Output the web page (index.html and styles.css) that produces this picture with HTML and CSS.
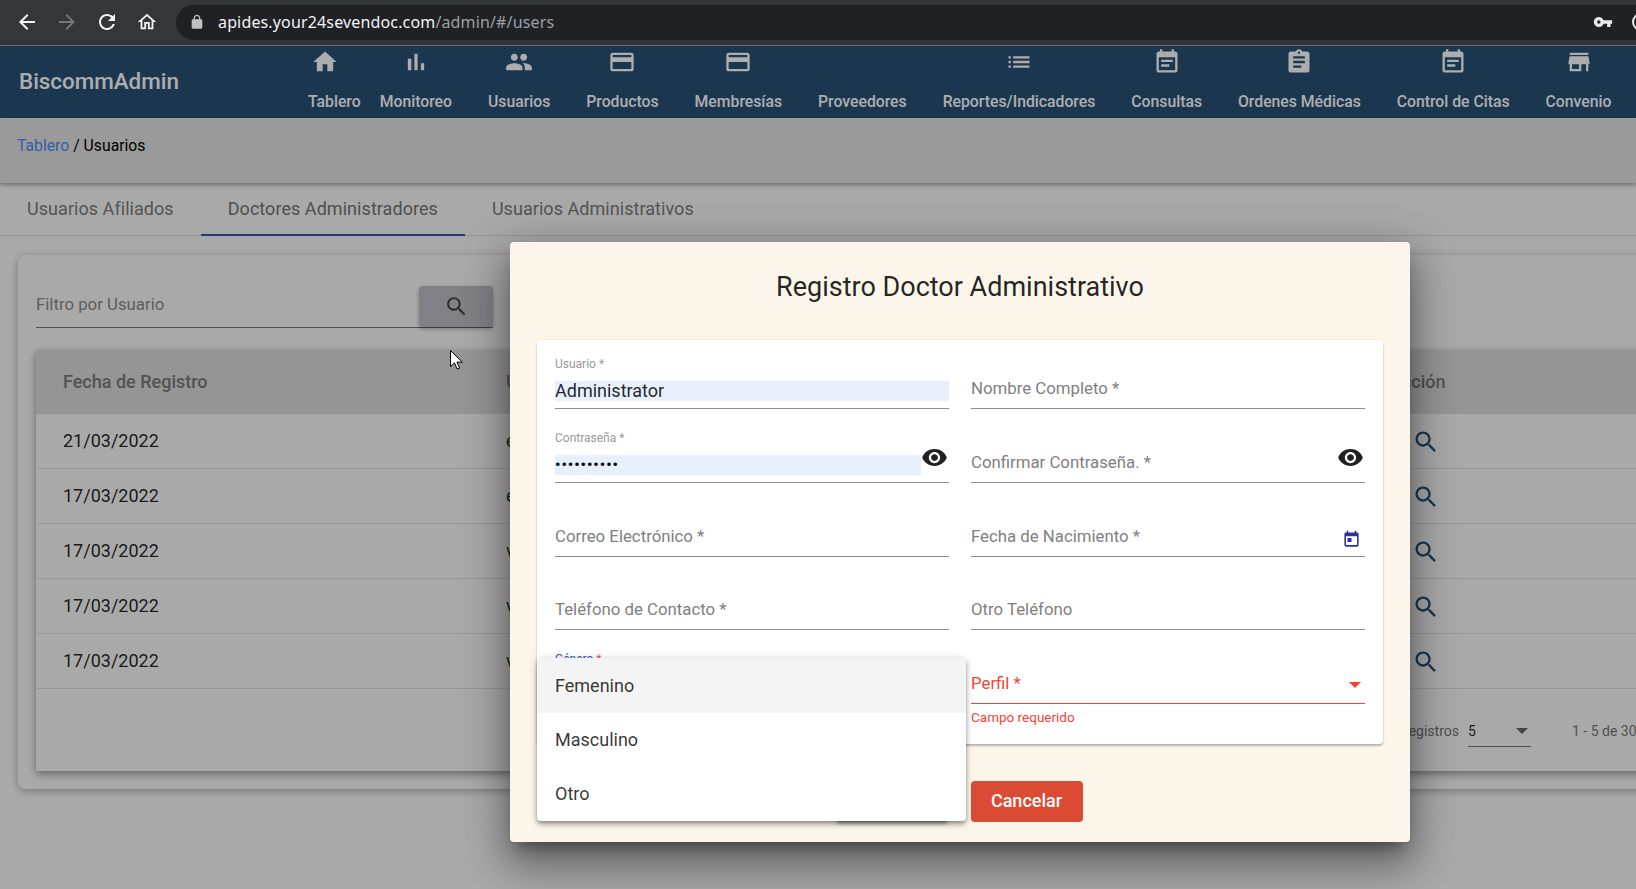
FILE: index.html
```html
<!DOCTYPE html>
<html lang="es">
<head>
<meta charset="utf-8">
<title>BiscommAdmin</title>
<link rel="stylesheet" href="styles.css">
</head>
<body>
<svg class="defs" aria-hidden="true">
  <symbol id="i-back" viewBox="0 0 24 24"><path d="M20 11H7.83l5.59-5.59L12 4l-8 8 8 8 1.41-1.41L7.83 13H20v-2z"/></symbol>
  <symbol id="i-forward" viewBox="0 0 24 24"><path d="M4 11h12.17l-5.59-5.59L12 4l8 8-8 8-1.41-1.41L16.17 13H4v-2z"/></symbol>
  <symbol id="i-reload" viewBox="0 0 24 24"><path d="M17.65 6.35C16.2 4.9 14.21 4 12 4c-4.42 0-7.99 3.58-7.99 8s3.57 8 7.99 8c3.73 0 6.84-2.55 7.73-6h-2.08c-.82 2.33-3.04 4-5.65 4-3.31 0-6-2.69-6-6s2.69-6 6-6c1.66 0 3.14.69 4.22 1.78L13 11h7V4l-2.35 2.35z"/></symbol>
  <symbol id="i-homeline" viewBox="0 0 24 24"><path d="M12 5.69l5 4.5V18h-2v-6H9v6H7v-7.81l5-4.5M12 3L2 12h3v8h6v-6h2v6h6v-8h3L12 3z"/></symbol>
  <symbol id="i-lock" viewBox="0 0 24 24"><path d="M18 8h-1V6c0-2.76-2.24-5-5-5S7 3.24 7 6v2H6c-1.1 0-2 .9-2 2v10c0 1.1.9 2 2 2h12c1.1 0 2-.9 2-2V10c0-1.1-.9-2-2-2zM9 6c0-1.66 1.34-3 3-3s3 1.34 3 3v2H9V6z"/></symbol>
  <symbol id="i-key" viewBox="0 0 24 24"><path d="M12.65 10C11.83 7.67 9.61 6 7 6c-3.31 0-6 2.69-6 6s2.69 6 6 6c2.61 0 4.83-1.67 5.65-4H17v4h4v-4h2v-4H12.65zM7 14c-1.1 0-2-.9-2-2s.9-2 2-2 2 .9 2 2-.9 2-2 2z"/></symbol>
  <symbol id="i-home" viewBox="0 0 24 24"><path d="M10 20v-6h4v6h5v-8h3L12 3 2 12h3v8z"/></symbol>
  <symbol id="i-bars" viewBox="0 0 24 24"><path d="M5 9.2h3V19H5zM10.6 5h2.8v14h-2.8zm5.6 8H19v6h-2.8z"/></symbol>
  <symbol id="i-people" viewBox="0 0 24 24"><path d="M16 11c1.66 0 2.99-1.34 2.99-3S17.66 5 16 5c-1.66 0-3 1.34-3 3s1.34 3 3 3zm-8 0c1.66 0 2.99-1.34 2.99-3S9.66 5 8 5C6.34 5 5 6.34 5 8s1.34 3 3 3zm0 2c-2.33 0-7 1.17-7 3.5V19h14v-2.5c0-2.33-4.67-3.5-7-3.5zm8 0c-.29 0-.62.02-.97.05 1.16.84 1.97 1.97 1.97 3.45V19h6v-2.5c0-2.33-4.67-3.5-7-3.5z"/></symbol>
  <symbol id="i-card" viewBox="0 0 24 24"><path d="M20 4H4c-1.11 0-1.99.89-1.99 2L2 18c0 1.11.89 2 2 2h16c1.11 0 2-.89 2-2V6c0-1.11-.89-2-2-2zm0 14H4v-6h16v6zm0-10H4V6h16v2z"/></symbol>
  <symbol id="i-list" viewBox="0 0 24 24"><path d="M3 13h2v-2H3v2zm0 4h2v-2H3v2zm0-8h2V7H3v2zm4 4h14v-2H7v2zm0 4h14v-2H7v2zM7 7v2h14V7H7z"/></symbol>
  <symbol id="i-note" viewBox="0 0 24 24"><path d="M17 10H7v2h10v-2zm2-7h-1V1h-2v2H8V1H6v2H5c-1.11 0-1.99.9-1.99 2L3 19c0 1.1.89 2 2 2h14c1.1 0 2-.9 2-2V5c0-1.1-.9-2-2-2zm0 16H5V8h14v11zm-5-5H7v2h7v-2z"/></symbol>
  <symbol id="i-assign" viewBox="0 0 24 24"><path d="M19 3h-4.18C14.4 1.84 13.3 1 12 1c-1.3 0-2.4.84-2.82 2H5c-1.1 0-2 .9-2 2v14c0 1.1.9 2 2 2h14c1.1 0 2-.9 2-2V5c0-1.1-.9-2-2-2zm-7 0c.55 0 1 .45 1 1s-.45 1-1 1-1-.45-1-1 .45-1 1-1zm2 14H7v-2h7v2zm3-4H7v-2h10v2zm0-4H7V7h10v2z"/></symbol>
  <symbol id="i-store" viewBox="0 0 24 24"><path d="M20 4H4v2h16V4zm1 10v-2l-1-5H4l-1 5v2h1v6h10v-6h4v6h2v-6h1zm-9 4H6v-4h6v4z"/></symbol>
  <symbol id="i-eye" viewBox="0 0 24 24"><path d="M12 4.5C7 4.5 2.73 7.61 1 12c1.73 4.39 6 7.5 11 7.5s9.27-3.11 11-7.5c-1.73-4.39-6-7.5-11-7.5zM12 17c-2.76 0-5-2.24-5-5s2.24-5 5-5 5 2.24 5 5-2.24 5-5 5zm0-8c-1.66 0-3 1.34-3 3s1.34 3 3 3 3-1.34 3-3-1.34-3-3-3z"/></symbol>
  <symbol id="i-search" viewBox="0 0 24 24"><path d="M15.5 14h-.79l-.28-.27C15.41 12.59 16 11.11 16 9.5 16 5.91 13.09 3 9.5 3S3 5.91 3 9.5 5.91 16 9.5 16c1.61 0 3.09-.59 4.23-1.57l.27.28v.79l5 4.99L20.49 19l-4.99-5zm-6 0C7.01 14 5 11.99 5 9.5S7.01 5 9.5 5 14 7.01 14 9.5 11.99 14 9.5 14z"/></symbol>
  <symbol id="i-today" viewBox="0 0 24 24"><path d="M19 3h-1V1h-2v2H8V1H6v2H5c-1.11 0-1.99.9-1.99 2L3 19c0 1.1.89 2 2 2h14c1.1 0 2-.9 2-2V5c0-1.1-.9-2-2-2zm0 16H5V8h14v11zM7 10h5v5H7z"/></symbol>
</svg>

<div class="browser">
  <svg class="b-icon"><use href="#i-back"/></svg>
  <svg class="b-icon b-icon-off"><use href="#i-forward"/></svg>
  <svg class="b-icon"><use href="#i-reload"/></svg>
  <svg class="b-icon b-icon-home"><use href="#i-homeline"/></svg>
  <div class="omnibox">
    <svg class="omni-lock"><use href="#i-lock"/></svg>
    <span class="url">apides.your24sevendoc.com<span class="url-path">/admin/#/users</span></span>
    <svg class="omni-key"><use href="#i-key"/></svg>
    <span class="omni-avatar"></span>
  </div>
</div>

<header class="topbar">
  <div class="brand">BiscommAdmin</div>
  <nav class="nav">
    <a class="nav-item nav-item-tight"><svg class="nav-icon"><use href="#i-home"/></svg><span>Tablero</span></a>
    <a class="nav-item"><svg class="nav-icon"><use href="#i-bars"/></svg><span>Monitoreo</span></a>
    <a class="nav-item"><svg class="nav-icon"><use href="#i-people"/></svg><span>Usuarios</span></a>
    <a class="nav-item"><svg class="nav-icon"><use href="#i-card"/></svg><span>Productos</span></a>
    <a class="nav-item"><svg class="nav-icon"><use href="#i-card"/></svg><span>Membresías</span></a>
    <a class="nav-item"><span class="nav-icon"></span><span>Proveedores</span></a>
    <a class="nav-item"><svg class="nav-icon"><use href="#i-list"/></svg><span>Reportes/Indicadores</span></a>
    <a class="nav-item"><svg class="nav-icon"><use href="#i-note"/></svg><span>Consultas</span></a>
    <a class="nav-item"><svg class="nav-icon"><use href="#i-assign"/></svg><span>Ordenes Médicas</span></a>
    <a class="nav-item"><svg class="nav-icon"><use href="#i-note"/></svg><span>Control de Citas</span></a>
    <a class="nav-item"><svg class="nav-icon"><use href="#i-store"/></svg><span>Convenio</span></a>
  </nav>
</header>

<div class="crumbs"><a class="crumb-link">Tablero</a> / Usuarios</div>

<div class="tabs">
  <div class="tab">Usuarios Afiliados</div>
  <div class="tab tab-active">Doctores Administradores</div>
  <div class="tab">Usuarios Administrativos</div>
</div>

<main class="card">
  <div class="filter">
    <span class="filter-text">Filtro por Usuario</span>
    <button class="filter-btn"><svg class="icon-24"><use href="#i-search"/></svg></button>
  </div>
  <section class="table">
    <div class="row row-head"><span>Fecha de Registro</span><span>U</span><span>Acción</span></div>
    <div class="row"><span>21/03/2022</span><span>e</span><svg class="row-action"><use href="#i-search"/></svg></div>
    <div class="row"><span>17/03/2022</span><span>e</span><svg class="row-action"><use href="#i-search"/></svg></div>
    <div class="row"><span>17/03/2022</span><span>v</span><svg class="row-action"><use href="#i-search"/></svg></div>
    <div class="row"><span>17/03/2022</span><span>v</span><svg class="row-action"><use href="#i-search"/></svg></div>
    <div class="row"><span>17/03/2022</span><span>v</span><svg class="row-action"><use href="#i-search"/></svg></div>
    <div class="pager">
      <span class="pager-label">Registros</span>
      <span class="pager-select"><span>5</span><i class="caret caret-grey"></i></span>
      <span class="pager-range">1 - 5 de 30</span>
    </div>
  </section>
</main>

<div class="backdrop">
  <div class="modal">
    <h2 class="modal-title">Registro Doctor Administrativo</h2>
    <form class="form-card">
      <div class="field"><div class="control"><label class="float">Usuario *</label><div class="autofill">Administrator</div></div></div>
      <div class="field"><div class="control"><span class="ph">Nombre Completo *</span></div></div>
      <div class="field"><div class="control"><label class="float">Contraseña *</label><div class="autofill autofill-pass">••••••••••</div><svg class="eye"><use href="#i-eye"/></svg></div></div>
      <div class="field"><div class="control"><span class="ph">Confirmar Contraseña. *</span><svg class="eye"><use href="#i-eye"/></svg></div></div>
      <div class="field"><div class="control"><span class="ph">Correo Electrónico *</span></div></div>
      <div class="field"><div class="control"><span class="ph">Fecha de Nacimiento *</span><svg class="cal"><use href="#i-today"/></svg></div></div>
      <div class="field"><div class="control"><span class="ph">Teléfono de Contacto *</span></div></div>
      <div class="field"><div class="control"><span class="ph">Otro Teléfono</span></div></div>
      <div class="field"><div class="control control-focus"><label class="float float-focus">Género <b class="star">*</b></label></div></div>
      <div class="field"><div class="control control-error"><span class="ph ph-error">Perfil *</span><i class="caret caret-red"></i></div><div class="hint-error">Campo requerido</div></div>
    </form>
    <div class="actions">
      <button class="btn btn-save" type="button">Guardar</button>
      <button class="btn btn-cancel" type="button">Cancelar</button>
    </div>
    <ul class="menu">
      <li class="menu-item menu-item-on">Femenino</li>
      <li class="menu-item">Masculino</li>
      <li class="menu-item">Otro</li>
    </ul>
  </div>
  <svg class="pointer" viewBox="0 0 13 20"><path d="M.5.5v16l4-3.6 2.6 6.2 2.4-1-2.6-6h5.4z"/></svg>
</div>
</body>
</html>
```

FILE: styles.css
```css
* { box-sizing: border-box; }

html, body {
  margin: 0;
  height: 889px;
  overflow: hidden;
}

body {
  position: relative;
  background: #fafafa;
  color: rgba(0, 0, 0, .87);
  font-family: Roboto, "Liberation Sans", sans-serif;
  font-size: 18px;
}

.defs { position: absolute; width: 0; height: 0; }

/* browser chrome */
.browser {
  display: flex;
  align-items: center;
  gap: 16px;
  height: 46px;
  padding-left: 15px;
  padding-bottom: 1px;
  background: #35363a;
  border-bottom: 1px solid #6a6b6e;
}
.b-icon { flex: none; width: 24px; height: 24px; fill: #f1f3f4; }
.b-icon-off { fill: #75777a; }
.b-icon-home { width: 22px; height: 22px; margin: 0 1px; }
.omnibox {
  flex: 1;
  min-width: 0;
  display: flex;
  align-items: center;
  height: 35px;
  margin-left: 1px;
  padding-left: 13px;
  overflow: hidden;
  background: #202124;
  border-radius: 18px 0 0 18px;
}
.omni-lock { flex: none; width: 16px; height: 16px; fill: #bdc1c6; }
.url {
  margin-left: 13px;
  color: #f1f3f4;
  font-family: "Noto Sans", sans-serif;
  font-size: 16px;
  letter-spacing: .15px;
  white-space: nowrap;
}
.url-path { color: #9aa0a6; }
.omni-key { flex: none; width: 20px; height: 20px; margin-left: auto; fill: #e8eaed; }
.omni-avatar {
  flex: none;
  width: 18px;
  height: 18px;
  margin-left: 19px;
  margin-right: -14px;
  border: 2px solid #e8eaed;
  border-radius: 50%;
}

/* app header */
.topbar {
  display: flex;
  height: 72px;
  padding-left: 18px;
  background: #295176;
  color: #fff;
}
.brand {
  width: 161px;
  margin-right: 129px;
  padding-left: 1px;
  font-size: 22.4px;
  font-weight: 500;
  line-height: 70px;
  white-space: nowrap;
}
.nav { display: flex; gap: 36px; }
.nav-item {
  display: flex;
  flex-direction: column;
  align-items: center;
  padding-top: 2px;
  font-size: 15.75px;
  font-weight: 500;
  line-height: 20px;
  white-space: nowrap;
}
.nav-item-tight { margin-right: -17px; }
.nav-item-tight .nav-icon { transform: translateX(-9px); }
.nav-icon { display: block; width: 28px; height: 28px; margin-bottom: 16px; fill: #fff; }

/* breadcrumb */
.crumbs {
  position: relative;
  height: 65px;
  padding: 18px 17px 0;
  background: #e4e4e4;
  box-shadow: 0 2px 4px rgba(0, 0, 0, .35);
  font-size: 15.75px;
  line-height: 20px;
  color: #000;
}
.crumb-link { color: #4a8cf7; }

/* tabs */
.tabs {
  display: flex;
  height: 53px;
  border-bottom: 1px solid #dcdcdc;
}
.tab {
  padding: 0 27px;
  color: #7d7d7d;
  font-size: 18px;
  font-weight: 400;
  letter-spacing: .05px;
  line-height: 52px;
  white-space: nowrap;
}
.tab-active { color: #757575; box-shadow: inset 0 -2px 0 #3f51b5; height: 53px; }

/* list card */
.card {
  width: 1720px;
  margin: 19px 0 0 18px;
  padding: 31px 18px 18px;
  background: #fafafa;
  border-radius: 8px;
  box-shadow: 0 2px 8px rgba(0, 0, 0, .3);
}
.filter {
  display: flex;
  justify-content: space-between;
  width: 457px;
  height: 42px;
  border-bottom: 1px solid #777;
}
.filter-text { padding-top: 7px; color: #8a8a8a; font-size: 16.8px; line-height: 22px; }
.filter-btn {
  display: flex;
  align-items: center;
  justify-content: center;
  width: 74px;
  height: 41px;
  padding: 0;
  background: #bfbfc5;
  border: 0;
  border-radius: 4px;
  box-shadow: 0 2px 4px rgba(0, 0, 0, .3);
}
.icon-24 { width: 25px; height: 25px; fill: #444; }
.table { margin-top: 22px; background: #fafafa; box-shadow: 0 3px 8px rgba(0, 0, 0, .4); }
.row {
  display: grid;
  grid-template-columns: 443px 884px 1fr;
  align-items: center;
  height: 55px;
  padding-left: 27px;
  padding-bottom: 1px;
  border-bottom: 1px solid #dfdfdf;
}
.row-head {
  height: 64px;
  padding-bottom: 2px;
  background: #dcdcdc;
  border-bottom: 0;
  color: #7a7a7a;
  font-weight: 500;
}
.row-action { width: 28px; height: 28px; margin: 2px 0 0 22px; fill: #295176; }
.pager {
  display: flex;
  align-items: center;
  height: 82px;
  padding-top: 2px;
  font-size: 14px;
  color: #777;
}
.pager-label { width: 1423px; text-align: right; }
.pager-select {
  position: relative;
  width: 63px;
  height: 32px;
  margin-left: 9px;
  padding-top: 7px;
  line-height: 18px;
  color: rgba(0, 0, 0, .87);
  border-bottom: 1px solid #777;
}
.pager-range { margin-left: 41px; }
.caret {
  position: absolute;
  width: 0;
  height: 0;
  border-left: 6px solid transparent;
  border-right: 6px solid transparent;
}
.caret-grey { right: 3px; top: 13px; border-top: 6px solid #666; }
.caret-red { right: 4px; bottom: 15px; border-top: 6px solid #f44336; }

/* modal */
.backdrop {
  position: absolute;
  inset: 46px 0 0 0;
  background: rgba(0, 0, 0, .32);
}
.modal {
  position: absolute;
  left: 510px;
  top: 196px;
  width: 900px;
  height: 600px;
  padding: 29px 27px 0;
  background: #fcf5e9;
  border-radius: 4px;
  box-shadow: 0 11px 15px -7px rgba(0, 0, 0, .4), 0 24px 38px 3px rgba(0, 0, 0, .25), 0 9px 46px 8px rgba(0, 0, 0, .2);
}
.modal-title {
  margin: 0 0 37px;
  color: rgba(0, 0, 0, .87);
  font-size: 27px;
  font-weight: 400;
  line-height: 32px;
  text-align: center;
}
.form-card {
  display: grid;
  grid-template-columns: 1fr 1fr;
  grid-auto-rows: 73.75px;
  column-gap: 22px;
  height: 404px;
  padding: 17px 18px 0;
  background: #fff;
  border-radius: 4px;
  box-shadow: 0 2px 2px rgba(0, 0, 0, .25), 0 0 3px rgba(0, 0, 0, .08);
}
.control {
  position: relative;
  display: flex;
  flex-direction: column;
  justify-content: flex-end;
  height: 52px;
  padding-bottom: 7px;
  border-bottom: 1px solid #8c8c8c;
}
.float { color: #999; font-size: 12px; line-height: 16px; margin-bottom: 9px; }
.float-focus { color: #3f51b5; margin-bottom: 29px; }
.star { color: #f4476b; font-weight: 400; }
.autofill {
  height: 20px;
  background: #e8f0fe;
  color: rgba(0, 0, 0, .87);
  font-size: 18px;
  line-height: 20px;
}
.autofill-pass { width: 366px; color: #000; font-size: 15px; font-weight: 700; letter-spacing: 1px; }
.ph {
  padding-bottom: 3px;
  color: #808080;
  font-size: 16.8px;
  line-height: 20px;
}
.ph-error { color: #f44336; }
.control-error { border-bottom-color: #f44336; }
.control-focus { border-bottom-color: transparent; }
.hint-error { margin-top: 5px; color: #f44336; font-size: 13.5px; line-height: 16px; }
.eye { position: absolute; right: 1px; bottom: 11px; width: 27px; height: 27px; fill: #212121; }
.cal { position: absolute; right: 4px; bottom: 7px; width: 19px; height: 19px; fill: #2e2ea8; }

.actions { display: flex; justify-content: center; gap: 23px; margin-top: 37px; padding-right: 2px; }
.btn {
  width: 112px;
  height: 41px;
  padding: 0 0 2px;
  border: 0;
  border-radius: 4px;
  font: 500 18px Roboto, sans-serif;
  color: #fff;
}
.btn-save { background: #a3a3a3; box-shadow: 0 2px 3px rgba(0, 0, 0, .3); }
.btn-cancel { background: #db4a33; }

.menu {
  position: absolute;
  left: 27px;
  top: 416px;
  width: 429px;
  height: 163px;
  margin: 0;
  padding: 0;
  list-style: none;
  overflow: hidden;
  background: #fff;
  border-radius: 4px;
  box-shadow: 0 2px 4px -1px rgba(0, 0, 0, .3), 0 4px 5px rgba(0, 0, 0, .2), 0 1px 10px rgba(0, 0, 0, .15);
}
.menu-item {
  height: 54px;
  padding-left: 18px;
  color: rgba(0, 0, 0, .8);
  font-size: 18px;
  line-height: 54px;
}
.menu-item-on { height: 55px; line-height: 56px; background: #f4f4f4; }

.pointer {
  position: absolute;
  left: 450px;
  top: 304px;
  width: 13px;
  height: 20px;
  fill: #fff;
  stroke: #000;
  stroke-width: 1;
}
```
